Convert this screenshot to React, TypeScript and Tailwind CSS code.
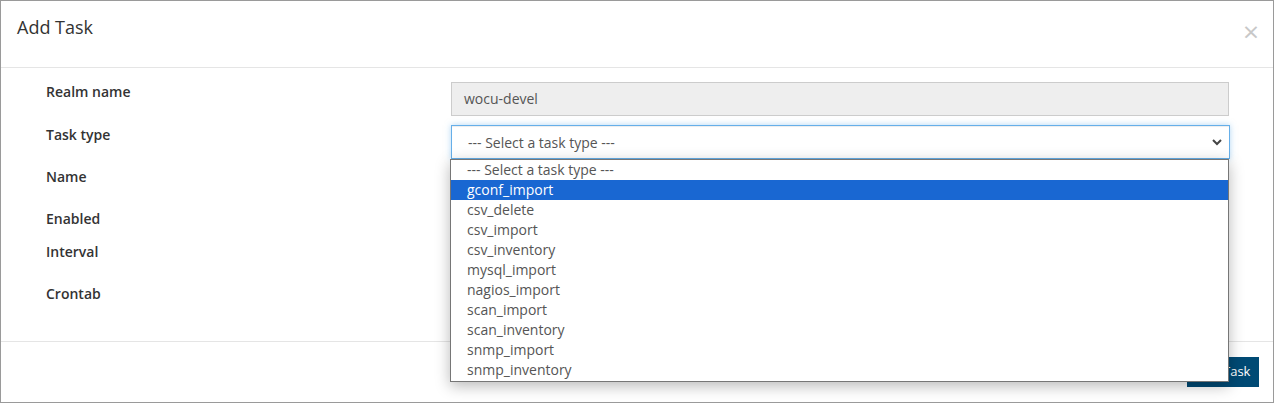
// Add Task modal with the task type select opened.
const FONT = { fontFamily: '"Open Sans", "Noto Sans", Arial, sans-serif' };

const TASK_TYPES = [
  "gconf_import",
  "csv_delete",
  "csv_import",
  "csv_inventory",
  "mysql_import",
  "nagios_import",
  "scan_import",
  "scan_inventory",
  "snmp_import",
  "snmp_inventory",
];

const FIELDS = [
  { label: "Realm name", height: "h-[43px]" },
  { label: "Task type", height: "h-[42px]" },
  { label: "Name", height: "h-[42px]" },
  { label: "Enabled", height: "h-[33px]" },
  { label: "Interval", height: "h-[42px]" },
  { label: "Crontab", height: "h-[43px]" },
];

function FieldRow({ label, height, children }: { label: string; height: string; children?: React.ReactNode }) {
  return (
    <div className={`flex ${height}`}>
      <div className="w-[435px] shrink-0 pl-[30px] text-[14px] leading-5 font-semibold text-[#333]">
        {label}
      </div>
      <div className="w-[779px] shrink-0">{children}</div>
    </div>
  );
}

function TaskTypeDropdown() {
  return (
    <div className="absolute left-[450px] top-[159px] z-10 w-[779px] border border-[#767676] bg-white shadow-[0_4px_14px_rgba(0,0,0,0.28)]">
      <div className="h-5 pl-4 text-[14px] leading-5 text-[#555]">--- Select a task type ---</div>
      {TASK_TYPES.map((type, index) => (
        <div
          key={type}
          className={
            index === 0
              ? "h-5 bg-[#1967d2] pl-4 text-[14px] leading-5 text-white"
              : "h-5 pl-4 text-[14px] leading-5 text-[#555]"
          }
        >
          {type}
        </div>
      ))}
      <div className="h-px" />
    </div>
  );
}

export default function App() {
  return (
    <div style={FONT} className="relative h-[403px] w-[1274px] overflow-hidden bg-white">
      <div className="flex h-[403px] flex-col border border-[#9a9a9a] bg-white">
        <div className="flex h-[67px] shrink-0 items-start justify-between border-b border-[#e5e5e5] pl-4 pr-[14px] pt-[14px]">
          <h4 className="text-[18px] leading-6 text-[#333]">Add Task</h4>
          <span className="mt-[4px] text-[28px] leading-6 text-[#c8c8c8]">×</span>
        </div>

        <div className="h-[273px] shrink-0 pl-[15px] pt-[14px]">
          <FieldRow {...FIELDS[0]}>
            <div className="h-[34px] w-[778px] border border-[#ccc] bg-[#eee] pl-3 text-[14px] leading-8 text-[#555]">
              wocu-devel
            </div>
          </FieldRow>
          <FieldRow {...FIELDS[1]}>
            <div className="flex h-[34px] w-[779px] items-center justify-between border border-[#66afe9] bg-white pl-4 pr-[6px] text-[14px] text-[#555] shadow-[inset_0_1px_1px_rgba(0,0,0,0.075),0_0_6px_rgba(102,175,233,0.5)]">
              <span>--- Select a task type ---</span>
              <svg width="12" height="12" viewBox="0 0 12 12" className="text-[#444]">
                <path d="M2 4 L6 8 L10 4" fill="none" stroke="currentColor" strokeWidth="2" />
              </svg>
            </div>
          </FieldRow>
          {FIELDS.slice(2).map((field) => (
            <FieldRow key={field.label} {...field} />
          ))}
        </div>

        <div className="flex flex-1 items-start justify-end border-t border-[#e5e5e5] pr-[14px] pt-[15px]">
          <button
            type="button"
            className="h-[30px] w-[72px] bg-[#004a74] text-[13px] text-white"
          >
            Add Task
          </button>
        </div>
      </div>
      <TaskTypeDropdown />
    </div>
  );
}
